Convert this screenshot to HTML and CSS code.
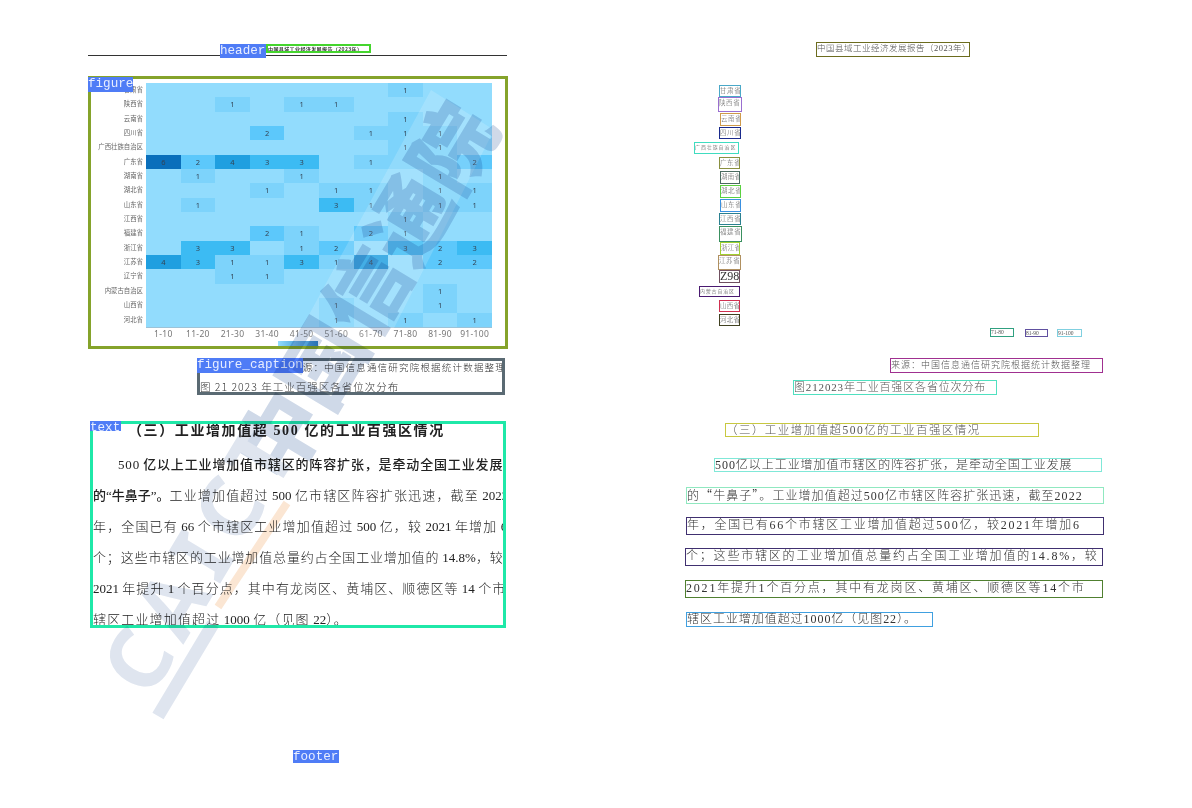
FILE: index.html
```html
<!DOCTYPE html>
<html lang="en">
<head>
    <meta charset="UTF-8">
    <title>Layout detection result</title>
    <link rel="stylesheet" href="styles.css">
</head>
<body>
    <!-- Left page: detected regions -->
    <div class="rule"></div>
    <div class="tag tag-header">header</div>
    <div class="box head-box">中国县域工业经济发展报告（2023年）</div>

    <div class="box figure-box">
        <div class="heatmap">
            <span class="prov">甘肃省</span><i></i><i></i><i></i><i></i><i></i><i></i><i></i><i class="v1">1</i><i></i><i></i>
            <span class="prov">陕西省</span><i></i><i></i><i class="v1">1</i><i></i><i class="v1">1</i><i class="v1">1</i><i></i><i></i><i></i><i></i>
            <span class="prov">云南省</span><i></i><i></i><i></i><i></i><i></i><i></i><i></i><i class="v1">1</i><i></i><i></i>
            <span class="prov">四川省</span><i></i><i></i><i></i><i class="v2">2</i><i></i><i></i><i class="v1">1</i><i class="v1">1</i><i class="v1">1</i><i></i>
            <span class="prov">广西壮族自治区</span><i></i><i></i><i></i><i></i><i></i><i></i><i></i><i class="v1">1</i><i class="v1">1</i><i></i>
            <span class="prov">广东省</span><i class="v6">6</i><i class="v2">2</i><i class="v4">4</i><i class="v3">3</i><i class="v3">3</i><i></i><i class="v1">1</i><i class="v1"></i><i class="v1"></i><i class="v2">2</i>
            <span class="prov">湖南省</span><i></i><i class="v1">1</i><i></i><i></i><i class="v1">1</i><i></i><i></i><i></i><i class="v1">1</i><i></i>
            <span class="prov">湖北省</span><i></i><i></i><i></i><i class="v1">1</i><i></i><i class="v1">1</i><i class="v1">1</i><i></i><i class="v1">1</i><i class="v1">1</i>
            <span class="prov">山东省</span><i></i><i class="v1">1</i><i></i><i></i><i></i><i class="v3">3</i><i class="v1">1</i><i></i><i class="v1">1</i><i class="v1">1</i>
            <span class="prov">江西省</span><i></i><i></i><i></i><i></i><i></i><i></i><i></i><i class="v1">1</i><i></i><i></i>
            <span class="prov">福建省</span><i></i><i></i><i></i><i class="v2">2</i><i class="v1">1</i><i></i><i class="v2">2</i><i class="v1">1</i><i></i><i></i>
            <span class="prov">浙江省</span><i></i><i class="v3">3</i><i class="v3">3</i><i></i><i class="v1">1</i><i class="v2">2</i><i></i><i class="v3">3</i><i class="v2">2</i><i class="v3">3</i>
            <span class="prov">江苏省</span><i class="v4">4</i><i class="v3">3</i><i class="v1">1</i><i class="v1">1</i><i class="v3">3</i><i class="v1">1</i><i class="v4">4</i><i></i><i class="v2">2</i><i class="v2">2</i>
            <span class="prov">辽宁省</span><i></i><i></i><i class="v1">1</i><i class="v1">1</i><i></i><i></i><i></i><i></i><i></i><i></i>
            <span class="prov">内蒙古自治区</span><i></i><i></i><i></i><i></i><i></i><i></i><i></i><i></i><i class="v1">1</i><i></i>
            <span class="prov">山西省</span><i></i><i></i><i></i><i></i><i></i><i class="v1">1</i><i></i><i></i><i class="v1">1</i><i></i>
            <span class="prov">河北省</span><i></i><i></i><i></i><i></i><i></i><i class="v1">1</i><i></i><i class="v1">1</i><i></i><i class="v1">1</i>
            <span></span><b>1-10</b><b>11-20</b><b>21-30</b><b>31-40</b><b>41-50</b><b>51-60</b><b>61-70</b><b>71-80</b><b>81-90</b><b>91-100</b>
        </div>
        <div class="legend"></div>
    </div>
    <div class="tag tag-figure">figure</div>

    <div class="box caption-box">
        <div class="cap-source">来源：中国信息通信研究院根据统计数据整理</div>
        <div class="cap-title">图 21 2023 年工业百强区各省位次分布</div>
    </div>
    <div class="tag tag-caption">figure_caption</div>

    <div class="box text-box">
        <div class="text-head">（三）工业增加值超 500 亿的工业百强区情况</div>
        <div class="text-line first"><strong>500 亿以上工业增加值市辖区的阵容扩张，是牵动全国工业发展</strong></div>
        <div class="text-line"><strong class="tight">的“牛鼻子”。</strong>工业增加值超过 <span class="num">500</span> 亿市辖区阵容扩张迅速，截至 <span class="num">2022</span></div>
        <div class="text-line">年，全国已有 <span class="num">66</span> 个市辖区工业增加值超过 <span class="num">500</span> 亿，较 <span class="num">2021</span> 年增加 <span class="num">6</span></div>
        <div class="text-line narrow">个；这些市辖区的工业增加值总量约占全国工业增加值的 <span class="num">14.8%</span>，较</div>
        <div class="text-line narrow-s"><span class="num">2021</span> 年提升 <span class="num">1</span> 个百分点，其中有龙岗区、黄埔区、顺德区等 <span class="num">14</span> 个市</div>
        <div class="text-line">辖区工业增加值超过 <span class="num">1000</span> 亿（见图 <span class="num">22</span>）。</div>
    </div>
    <div class="tag tag-text">text</div>
    <div class="tag tag-footer">footer</div>

    <!-- Watermark over the left page -->
    <svg class="band" width="600" height="808" viewBox="0 0 600 808">
        <polygon points="431,90 494,130 385,346 292,346"/>
    </svg>
    <svg class="watermark" width="600" height="808" viewBox="0 0 600 808">
        <text class="wm-cn" transform="translate(285,488) rotate(-59)">中国信通院</text>
        <text class="wm-en" transform="translate(150,700) rotate(-59)">CAICT</text>
        <line class="wm-slash" x1="158" y1="716" x2="213" y2="624"/>
        <line class="wm-orange" x1="218" y1="607" x2="287" y2="503"/>
    </svg>

    <!-- Right page: recognised text -->
    <div class="box r r-header">中国县域工业经济发展报告（2023年）</div>
    <div class="box r p r1">甘肃省</div>
    <div class="box r p r2">陕西省</div>
    <div class="box r p r3">云南省</div>
    <div class="box r p r4">四川省</div>
    <div class="box r p r5">广西壮族自治区</div>
    <div class="box r p r6">广东省</div>
    <div class="box r p r7">湖南省</div>
    <div class="box r p r8">湖北省</div>
    <div class="box r p r9">山东省</div>
    <div class="box r p r10">江西省</div>
    <div class="box r p r11">福建省</div>
    <div class="box r p r12">浙江省</div>
    <div class="box r p r13">江苏省</div>
    <div class="box r p r14">Z98</div>
    <div class="box r p r15">内蒙古自治区</div>
    <div class="box r p r16">山西省</div>
    <div class="box r p r17">河北省</div>
    <div class="box r a a1">71-80</div>
    <div class="box r a a2">81-90</div>
    <div class="box r a a3">91-100</div>
    <div class="box r r-source">来源：中国信息通信研究院根据统计数据整理</div>
    <div class="box r r-title">图212023年工业百强区各省位次分布</div>
    <div class="box r r-head">（三）工业增加值超500亿的工业百强区情况</div>
    <div class="box r l l1">500亿以上工业增加值市辖区的阵容扩张，是牵动全国工业发展</div>
    <div class="box r l l2">的<span class="cjk">“</span>牛鼻子<span class="cjk">”</span>。工业增加值超过500亿市辖区阵容扩张迅速，截至2022</div>
    <div class="box r l l3">年，全国已有66个市辖区工业增加值超过500亿，较2021年增加6</div>
    <div class="box r l l4">个；这些市辖区的工业增加值总量约占全国工业增加值的14.8%，较</div>
    <div class="box r l l5">2021年提升1个百分点，其中有龙岗区、黄埔区、顺德区等14个市</div>
    <div class="box r l l6">辖区工业增加值超过1000亿（见图22）。</div>
</body>
</html>
```

FILE: styles.css
```css
html, body {
    margin: 0;
    padding: 0;
    background-color: #fff;
}
body {
    position: relative;
    width: 1192px;
    height: 808px;
    overflow: hidden;
    font-family: "Liberation Serif", "Noto Sans CJK SC", serif;
    color: #222;
}
.box {
    position: absolute;
    box-sizing: border-box;
    overflow: hidden;
    white-space: nowrap;
}
.rule {
    position: absolute;
    left: 88px;
    top: 55px;
    width: 419px;
    height: 1px;
    background-color: #333;
}

/* Blue class labels */
.tag {
    position: absolute;
    overflow: hidden;
    background-color: #4f7cf6;
    color: #e8eeff;
    font-family: "Liberation Mono", monospace;
    font-size: 12.6px;
    line-height: 15px;
    white-space: nowrap;
}
.tag-header { left: 220px; top: 44px; width: 46px; height: 14px; }
.tag-figure { left: 88px; top: 77px; width: 45px; height: 15px; }
.tag-caption { left: 197px; top: 358px; width: 106px; height: 15px; }
.tag-text { left: 90px; top: 421px; width: 31px; height: 10px; line-height: 14px; }
.tag-footer { left: 293px; top: 750px; width: 46px; height: 13px; line-height: 14px; }

.head-box {
    left: 266px;
    top: 44px;
    width: 105px;
    height: 9px;
    border: 2px solid #45d52e;
    font-family: "Noto Sans CJK SC", sans-serif;
    font-size: 5px;
    line-height: 5px;
    font-weight: bold;
    letter-spacing: 0.4px;
    color: #333;
}

/* Heatmap figure */
.figure-box {
    left: 88px;
    top: 76px;
    width: 420px;
    height: 273px;
    border: 3px solid #85a32b;
    padding-top: 4px;
    background-color: #fff;
}
.heatmap {
    display: grid;
    grid-template-columns: 55px repeat(10, 34.6px);
    grid-auto-rows: 14.35px;
    filter: blur(0.5px);
}
.heatmap i {
    display: block;
    background-color: #92dcfd;
    color: #345;
    font-family: "Noto Sans", sans-serif;
    font-size: 7.5px;
    font-style: normal;
    line-height: 14.35px;
    text-align: center;
}
.heatmap .v1 { background-color: #7dd3fb; }
.heatmap .v2 { background-color: #5cc8fb; }
.heatmap .v3 { background-color: #3cbbf3; }
.heatmap .v4 { background-color: #1f9fe0; }
.heatmap .v6 { background-color: #0a6fbb; }
.prov {
    padding-right: 3px;
    color: #666;
    font-family: "Noto Sans CJK SC", sans-serif;
    font-size: 6.4px;
    line-height: 14.35px;
    text-align: right;
    white-space: nowrap;
}
.heatmap b {
    border-top: 1px solid #9cc3d8;
    color: #777;
    font-family: "Noto Sans", sans-serif;
    font-size: 8.5px;
    font-weight: 400;
    line-height: 11px;
    letter-spacing: 0.3px;
    text-align: center;
}
.legend {
    width: 40px;
    height: 5px;
    margin: 0 0 0 187px;
    background: linear-gradient(to right, #92dcfd, #0a6fbb);
}

/* Caption */
.caption-box {
    left: 197px;
    top: 358px;
    width: 308px;
    height: 37px;
    border: 3px solid #5a6a73;
    font-family: "Noto Sans CJK SC", sans-serif;
    font-weight: 300;
    color: #333;
}
.cap-source {
    margin-left: 92px;
    font-size: 9.5px;
    line-height: 13px;
    letter-spacing: 1.2px;
}
.cap-title {
    margin-top: 6px;
    font-size: 10.5px;
    line-height: 14px;
    letter-spacing: 1px;
}

/* Text block */
.text-box {
    left: 90px;
    top: 421px;
    width: 416px;
    height: 207px;
    border: 3px solid #1fe8a8;
    font-family: "Liberation Serif", "Noto Sans CJK SC", serif;
    color: #222;
}
.text-head {
    margin-top: -2px;
    margin-left: 35px;
    font-size: 14px;
    font-weight: bold;
    line-height: 17px;
    letter-spacing: 1.6px;
}
.text-line {
    margin-top: 12px;
    height: 19px;
    font-size: 13px;
    font-weight: 300;
    line-height: 19px;
    letter-spacing: 1.15px;
    word-spacing: -1px;
}
.text-line.first {
    margin-top: 16px;
    padding-left: 25px;
    letter-spacing: 0.85px;
}
.text-line.narrow { letter-spacing: 0.85px; }
.text-line.narrow-s { letter-spacing: 1.05px; }
.text-line strong { font-weight: 500; }
.text-line .tight { letter-spacing: 0; }
.text-line .num { letter-spacing: 0; }

/* Watermark */
.band {
    position: absolute;
    left: 0;
    top: 0;
    fill: rgba(255, 255, 255, 0.16);
    pointer-events: none;
}
.watermark {
    position: absolute;
    left: 0;
    top: 0;
    mix-blend-mode: multiply;
    pointer-events: none;
}
.wm-cn {
    fill: #cfd9e8;
    font-family: "Noto Sans CJK SC", sans-serif;
    font-size: 84px;
    font-weight: 900;
}
.wm-en {
    fill: #dfe5ef;
    font-family: "Noto Sans", sans-serif;
    font-size: 85px;
    font-weight: 700;
    letter-spacing: 10px;
}
.wm-slash { stroke: #dfe5ef; stroke-width: 13px; }
.wm-orange { stroke: #fbe6d3; stroke-width: 8px; }

/* Right page */
.r {
    border: 1px solid #444;
    font-family: "Liberation Serif", "Noto Sans CJK SC", serif;
    color: #555;
    font-weight: 300;
}
.cjk { font-family: "Noto Sans CJK SC", sans-serif; }
.p { font-size: 6.5px; line-height: 9px; letter-spacing: 0.6px; }
.a { font-size: 5.5px; line-height: 7px; }
.l { font-size: 12px; line-height: 14px; letter-spacing: 0.95px; color: #333; }
.r-header { left: 816px; top: 42px; width: 154px; height: 15px; border-color: #6c6c1e; font-size: 8.5px; line-height: 11px; letter-spacing: 0.5px; }
.r1 { left: 719px; top: 85px; width: 22px; height: 12px; border-color: #4aa8c8; }
.r2 { left: 718px; top: 97px; width: 24px; height: 15px; border-color: #9a6fd0; }
.r3 { left: 720px; top: 113px; width: 21px; height: 13px; border-color: #cf9a4a; }
.r4 { left: 719px; top: 127px; width: 22px; height: 12px; border-color: #1a2a8c; }
.r5 { left: 694px; top: 142px; width: 45px; height: 12px; border-color: #3fdcc0; font-size: 5px; letter-spacing: 0.9px; }
.r6 { left: 719px; top: 157px; width: 21px; height: 12px; border-color: #8a9040; }
.r7 { left: 720px; top: 171px; width: 20px; height: 13px; border-color: #4a6a60; letter-spacing: 0.3px; }
.r8 { left: 720px; top: 185px; width: 21px; height: 13px; border-color: #5ad040; }
.r9 { left: 720px; top: 199px; width: 21px; height: 13px; border-color: #3a90e0; }
.r10 { left: 719px; top: 213px; width: 22px; height: 12px; border-color: #2a8090; }
.r11 { left: 719px; top: 226px; width: 23px; height: 16px; border-color: #3a9060; }
.r12 { left: 720px; top: 242px; width: 20px; height: 13px; border-color: #a0d030; letter-spacing: 0.3px; }
.r13 { left: 718px; top: 255px; width: 23px; height: 15px; border-color: #b09060; }
.r14 { left: 719px; top: 270px; width: 21px; height: 13px; border-color: #705060; font-size: 12px; line-height: 11px; letter-spacing: 0; color: #333; }
.r15 { left: 699px; top: 286px; width: 41px; height: 11px; border-color: #4a1a70; font-size: 5px; letter-spacing: 0.8px; }
.r16 { left: 719px; top: 300px; width: 21px; height: 12px; border-color: #d03050; letter-spacing: 0.3px; }
.r17 { left: 719px; top: 314px; width: 21px; height: 12px; border-color: #404020; letter-spacing: 0.3px; }
.a1 { left: 990px; top: 328px; width: 24px; height: 9px; border-color: #30a080; }
.a2 { left: 1025px; top: 329px; width: 23px; height: 8px; border-color: #6050a0; }
.a3 { left: 1057px; top: 329px; width: 25px; height: 8px; border-color: #80d0e0; }
.r-source { left: 890px; top: 358px; width: 213px; height: 15px; border-color: #a03090; font-size: 9px; line-height: 12px; letter-spacing: 1px; }
.r-title { left: 793px; top: 380px; width: 204px; height: 15px; border-color: #50e0c0; font-size: 11px; line-height: 13px; letter-spacing: 0.85px; }
.r-head { left: 725px; top: 423px; width: 314px; height: 14px; border-color: #c8c840; font-size: 11.5px; line-height: 12px; letter-spacing: 1.45px; }
.l1 { left: 714px; top: 458px; width: 388px; height: 14px; border-color: #80e8d8; line-height: 12px; }
.l2 { left: 686px; top: 487px; width: 418px; height: 17px; border-color: #90e8c0; letter-spacing: 1.05px; }
.l3 { left: 686px; top: 517px; width: 418px; height: 18px; border-color: #403070; letter-spacing: 1.75px; }
.l4 { left: 685px; top: 548px; width: 418px; height: 18px; border-color: #403070; letter-spacing: 1.8px; }
.l5 { left: 685px; top: 580px; width: 418px; height: 18px; border-color: #508030; letter-spacing: 1.8px; }
.l6 { left: 686px; top: 612px; width: 247px; height: 15px; border-color: #40a0e0; line-height: 13px; }
```
